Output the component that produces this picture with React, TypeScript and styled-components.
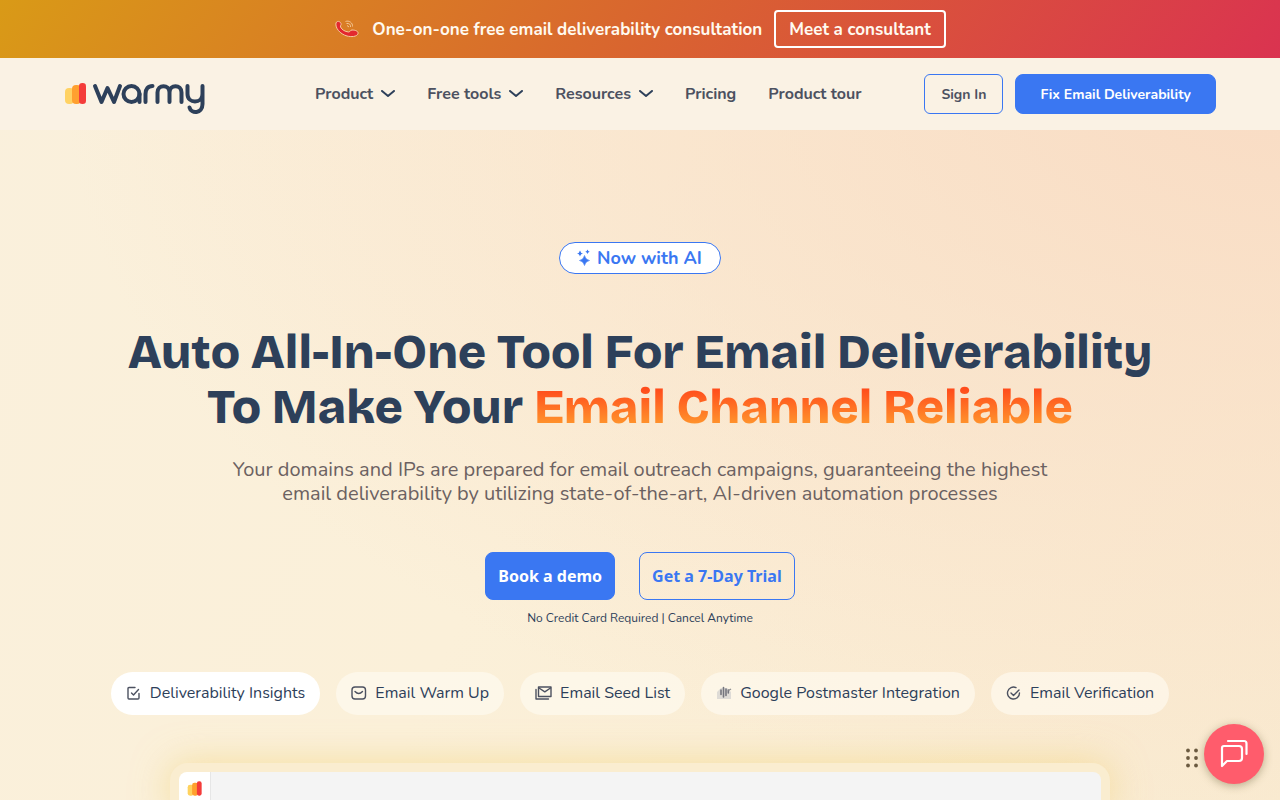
import React from 'react';
import styled, { createGlobalStyle, css } from 'styled-components';

const sans = '"Nunito", "Lato", sans-serif';
const navy = '#2d405a';
const blue = '#3a77f2';

const GlobalStyle = createGlobalStyle`
  *, *::before, *::after { box-sizing: border-box; }
  body { margin: 0; font-family: ${sans}; color: ${navy}; }
  button { font: inherit; cursor: pointer; }
  a { color: inherit; text-decoration: none; }
`;

const Page = styled.div`
  min-height: 100vh;
  display: flex;
  flex-direction: column;
  overflow: hidden;
  background:
    radial-gradient(ellipse 95% 90% at 100% 10%, #f9dcc4 0%, rgba(249, 220, 196, 0) 100%),
    linear-gradient(115deg, #faf0dc 0%, #fbf0d9 45%, #f9ead0 100%);
`;

const Banner = styled.aside`
  display: flex;
  align-items: center;
  justify-content: center;
  gap: 12px;
  padding: 10px 16px;
  color: #fffaf0;
  font-size: 17px;
  font-weight: 700;
  background: linear-gradient(125deg, #d99a17 0%, #d9652f 50%, #da3350 100%);
`;

const BannerText = styled.span`
  display: flex;
  align-items: center;
  gap: 12px;
`;

const BannerButton = styled.button`
  height: 38px;
  padding: 0 13px;
  border: 2px solid #fff;
  border-radius: 4px;
  background: transparent;
  color: #fffaf0;
  white-space: nowrap;
`;

const Header = styled.header`
  display: flex;
  align-items: center;
  height: 72px;
  padding: 0 64px;
  background: #faf2e4;
`;

const LogoLink = styled.a`
  display: flex;
  margin-right: 109px;
`;

const Nav = styled.nav`
  display: flex;
  align-items: center;
  gap: 32px;
`;

const navText = css`
  display: flex;
  align-items: center;
  gap: 8px;
  padding: 0;
  border: 0;
  background: none;
  color: #4c5160;
  font-size: 16px;
  line-height: 24px;
  font-weight: 700;
  white-space: nowrap;
`;
const NavButton = styled.button`${navText}`;
const NavLink = styled.a`${navText}`;

const Actions = styled.div`
  display: flex;
  gap: 12px;
  margin-left: auto;
`;

const ActionButton = styled.button<{ $solid?: boolean }>`
  height: 40px;
  padding: 0 ${p => (p.$solid ? 24 : 16)}px;
  border: 1px solid ${blue};
  border-radius: ${p => (p.$solid ? 8 : 6)}px;
  background: ${p => (p.$solid ? blue : 'transparent')};
  color: ${p => (p.$solid ? '#fff' : '#4c5160')};
  font-size: 14px;
  font-weight: 700;
  white-space: nowrap;
`;

const Hero = styled.main`
  flex: 1;
  display: flex;
  flex-direction: column;
  align-items: center;
  padding: 112px 64px 0;
  text-align: center;
`;

const Badge = styled.div`
  display: flex;
  align-items: center;
  gap: 6px;
  height: 32px;
  padding: 0 18px 0 16px;
  border: 1px solid ${blue};
  border-radius: 16px;
  background: #fff;
  color: ${blue};
  font-size: 18px;
  font-weight: 700;
`;

const Title = styled.h1`
  margin: 51px 0 0;
  font-family: "Bricolage Grotesque", "Inter", sans-serif;
  font-optical-sizing: none;
  font-size: 48px;
  line-height: 55px;
  font-weight: 800;
  color: ${navy};
`;

const TitleLine = styled.span`
  display: block;
`;

const Glow = styled.span`
  background: linear-gradient(180deg, #ff4d1c 20%, #ff9a2e 85%);
  background-clip: text;
  -webkit-background-clip: text;
  color: transparent;
`;

const Lead = styled.p`
  max-width: 860px;
  margin: 23px 0 0;
  color: #6b6161;
  font-size: 20px;
  line-height: 24px;
`;

const CtaRow = styled.div`
  display: flex;
  gap: 24px;
  margin-top: 46px;
`;

const CtaButton = styled.button<{ $solid?: boolean }>`
  height: 48px;
  padding: 0 12px;
  border: 1px solid ${blue};
  border-radius: 8px;
  background: ${p => (p.$solid ? blue : 'transparent')};
  color: ${p => (p.$solid ? '#fff' : blue)};
  font-family: "Noto Sans", "Open Sans", sans-serif;
  font-size: 16px;
  font-weight: 700;
  white-space: nowrap;
`;

const Note = styled.p`
  margin: 10px 0 0;
  font-size: 12px;
  line-height: 16px;
`;

const Tabs = styled.div`
  display: flex;
  justify-content: center;
  gap: 16px;
  margin-top: 46px;
`;

const Tab = styled.button<{ $active?: boolean }>`
  display: flex;
  align-items: center;
  gap: 8px;
  height: 43px;
  padding: 0 15px 2px;
  border: 0;
  border-radius: 22px;
  background: ${p => (p.$active ? '#fff' : 'rgba(255, 251, 244, 0.6)')};
  color: ${navy};
  font-size: 16px;
  white-space: nowrap;
`;

const Preview = styled.section`
  flex: 1;
  display: flex;
  align-self: center;
  width: 100%;
  max-width: 940px;
  min-height: 37px;
  margin-top: 48px;
  padding: 9px 9px 0;
  border-radius: 18px 18px 0 0;
  background: #faedd0;
  box-shadow: 0 0 36px rgba(240, 208, 110, 0.55);
`;

const PreviewRail = styled.div`
  width: 32px;
  padding: 8px;
  border-right: 1px solid #e6e6e6;
  border-radius: 8px 0 0 0;
  background: #fff;
`;

const PreviewBody = styled.div`
  flex: 1;
  border-radius: 0 8px 0 0;
  background: #f4f4f4;
`;

const ChatDock = styled.div`
  position: fixed;
  right: 16px;
  bottom: 16px;
  display: flex;
  align-items: center;
  gap: 6px;
`;

const DragHandle = styled.svg`
  margin-top: 8px;
`;

const ChatButton = styled.button`
  display: grid;
  place-items: center;
  width: 60px;
  height: 60px;
  padding: 0;
  border: 0;
  border-radius: 50%;
  background: #ff5c6c;
  box-shadow: 0 2px 8px rgba(90, 80, 40, 0.4);
`;

const Bars = ({ size }: { size: number }) => (
  <svg width={size} height={size} viewBox="0 0 22 22" aria-hidden="true">
    <rect x="1" y="5.500" width="9" height="16" rx="3.500" fill="#ffd25e" />
    <rect x="7.500" y="2.500" width="9" height="19" rx="3.500" fill="#ffa02f" />
    <rect x="14.500" y="0.500" width="7" height="21" rx="3" fill="#f43c3a" />
  </svg>
);

const Logo = () => (
  <svg width="142" height="42" viewBox="0 0 142 42" role="img" aria-label="warmy">
    <rect x="1" y="15" width="9" height="16" rx="4" fill="#ffd262" />
    <rect x="8" y="12" width="9" height="19" rx="4" fill="#ffa02f" />
    <rect x="15" y="10" width="7" height="21" rx="3.300" fill="#f43c3a" />
    <g fill="none" stroke={navy} strokeWidth="4" strokeLinecap="round" strokeLinejoin="round">
      <path d="M31 13L37.500 29L43.500 15L50 29L56 13" />
      <circle cx="67.500" cy="21" r="8" />
      <path d="M75.500 21V29" />
      <path d="M81.500 29V21C81.500 16 84 13 88.500 13" />
      <path d="M93.500 29V19.500C93.500 11 105.500 11 105.500 19.500V29M105.500 19.500C105.500 11 117.500 11 117.500 19.500V29" />
      <path d="M123.500 13V21C123.500 31 138.500 31 138.500 21V13M138.500 21V31C138.500 41 127 41 125.500 34.500" />
    </g>
  </svg>
);

const Chevron = () => (
  <svg width="14" height="8" viewBox="0 0 14 8" aria-hidden="true">
    <path d="M1 1L7 6L13 1" fill="none" stroke={navy} strokeWidth="2" strokeLinecap="round" strokeLinejoin="round" />
  </svg>
);

const Phone = () => (
  <svg width="26" height="20" viewBox="0 0 26 20" aria-hidden="true">
    <path
      d="M2 4C3 1.500 6 2 7 4.500C7.500 6 6 6.500 6.500 8C8 11 11 12.500 14.500 13C16.500 13 16 11 18 11C21 11 24.500 12 24 14.500C23 18 17 18 13 17C6 15 1 9 2 4Z"
      fill="#e3282f" stroke="#f6c9a0" strokeWidth="1"
    />
    <path d="M11.500 2.500C15 1 19 4 18.500 7.500M12.500 4.500C15 4 17 5.500 16.500 8M13 6.500L15 8" fill="none" stroke="#f3c592" strokeWidth="1" />
  </svg>
);

const Sparkles = () => (
  <svg width="15" height="18" viewBox="0 0 15 18" fill={blue} aria-hidden="true">
    <path d="M8.500 6.500Q9.400 10.700 13.500 11.500Q9.400 12.300 8.500 16.500Q7.600 12.300 3.500 11.500Q7.600 10.700 8.500 6.500Z" stroke={blue} strokeWidth="0.600" />
    <path d="M4 1.500Q4.600 4 7 4.500Q4.600 5 4 7.500Q3.400 5 1 4.500Q3.400 4 4 1.500Z" />
    <path d="M11.500 0.500Q12 2.200 13.700 2.700Q12 3.200 11.500 4.900Q11 3.200 9.300 2.700Q11 2.200 11.500 0.500Z" />
  </svg>
);

const line = { fill: 'none', stroke: '#4c5160', strokeWidth: 1.4, strokeLinecap: 'round', strokeLinejoin: 'round' } as const;

const CheckBoxIcon = () => (
  <svg width="16" height="16" viewBox="0 0 16 16" aria-hidden="true" {...line}>
    <path d="M9 2.500H3Q2 2.500 2 3.500V13Q2 14 3 14H12Q13 14 13 13V8.500M5.500 8L7.500 10L12.500 4.500" />
  </svg>
);
const MailIcon = () => (
  <svg width="16" height="16" viewBox="0 0 16 16" aria-hidden="true" {...line}>
    <rect x="1" y="2" width="13.500" height="12" rx="3" />
    <path d="M4 6.500Q7.800 10.500 11.500 6.500" />
  </svg>
);
const MailStackIcon = () => (
  <svg width="17" height="16" viewBox="0 0 17 16" aria-hidden="true" {...line}>
    <rect x="3.500" y="2" width="12.500" height="9.500" />
    <path d="M4 3L9.800 6.800L15.500 3M1 4.500V14H13.500" />
  </svg>
);
const PostmasterIcon = () => (
  <svg width="16" height="16" viewBox="0 0 16 16" aria-hidden="true">
    <path d="M1 7L5 3H11L15 7V14H1Z" fill="#dedbd6" />
    <path d="M5 5V9.500M7.500 2.500V12M10 4V10.500M12.300 5V8" fill="none" stroke="#74757d" strokeWidth="1.600" strokeLinecap="round" />
    <path d="M12.500 5.500L15 4" stroke="#8d8d90" strokeWidth="1.400" />
  </svg>
);
const CheckCircleIcon = () => (
  <svg width="16" height="16" viewBox="0 0 16 16" aria-hidden="true" {...line}>
    <path d="M13.500 8A6 6 0 1 1 10 2.600M5 8L7.500 10.500L13 5" />
  </svg>
);

const tabs = [
  { label: 'Deliverability Insights', Icon: CheckBoxIcon },
  { label: 'Email Warm Up', Icon: MailIcon },
  { label: 'Email Seed List', Icon: MailStackIcon },
  { label: 'Google Postmaster Integration', Icon: PostmasterIcon },
  { label: 'Email Verification', Icon: CheckCircleIcon },
];

export default function App() {
  return (
    <>
      <GlobalStyle />
      <Page>
        <Banner>
          <BannerText>
            <Phone />
            One-on-one free email deliverability consultation
          </BannerText>
          <BannerButton type="button">Meet a consultant</BannerButton>
        </Banner>
        <Header>
          <LogoLink href="#"><Logo /></LogoLink>
          <Nav>
            {['Product', 'Free tools', 'Resources'].map(label => (
              <NavButton type="button" key={label}>{label}<Chevron /></NavButton>
            ))}
            <NavLink href="#pricing">Pricing</NavLink>
            <NavLink href="#tour">Product tour</NavLink>
          </Nav>
          <Actions>
            <ActionButton type="button">Sign In</ActionButton>
            <ActionButton type="button" $solid>Fix Email Deliverability</ActionButton>
          </Actions>
        </Header>
        <Hero>
          <Badge><Sparkles />Now with AI</Badge>
          <Title>
            <TitleLine>Auto All-In-One Tool For Email Deliverability</TitleLine>
            <TitleLine>To Make Your <Glow>Email Channel Reliable</Glow></TitleLine>
          </Title>
          <Lead>
            Your domains and IPs are prepared for email outreach campaigns, guaranteeing the highest
            email deliverability by utilizing state-of-the-art, AI-driven automation processes
          </Lead>
          <CtaRow>
            <CtaButton type="button" $solid>Book a demo</CtaButton>
            <CtaButton type="button">Get a 7-Day Trial</CtaButton>
          </CtaRow>
          <Note>No Credit Card Required | Cancel Anytime</Note>
          <Tabs>
            {tabs.map(({ label, Icon }, i) => (
              <Tab type="button" key={label} $active={i === 0}><Icon />{label}</Tab>
            ))}
          </Tabs>
          <Preview>
            <PreviewRail><Bars size={15} /></PreviewRail>
            <PreviewBody />
          </Preview>
        </Hero>
      </Page>
      <ChatDock>
        <DragHandle width="12" height="20" viewBox="0 0 12 20" fill="#6b5a40" aria-hidden="true">
          {[2, 10].map(x => [2.5, 10, 17.5].map(y => <circle key={`${x}-${y}`} cx={x} cy={y} r="1.900" />))}
        </DragHandle>
        <ChatButton type="button" aria-label="Open chat">
          <svg width="30" height="30" viewBox="0 0 30 30" fill="none" stroke="#fff" strokeWidth="2.200" strokeLinecap="round" strokeLinejoin="round" aria-hidden="true">
            <path d="M5 7H20Q23 7 23 10V19Q23 22 20 22H8L3 27V9Q3 7 5 7Z" />
            <path d="M9 2H25Q27.500 2 27.500 4.500V15" />
          </svg>
        </ChatButton>
      </ChatDock>
    </>
  );
}
